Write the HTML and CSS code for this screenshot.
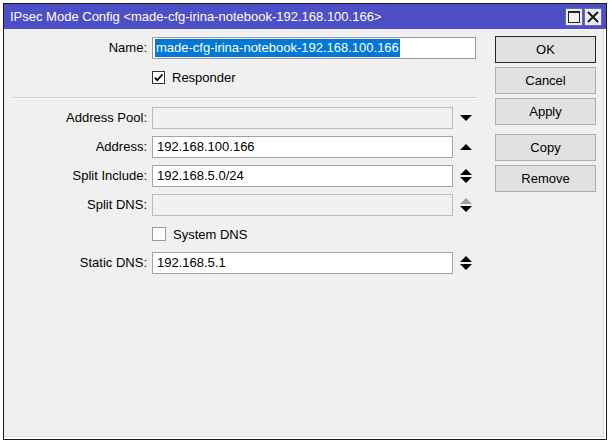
FILE: index.html
```html
<!DOCTYPE html>
<html>
<head>
<meta charset="utf-8">
<link rel="stylesheet" href="styles.css">
</head>
<body>
<div class="window">
  <div class="titlebar">
    <span class="title">IPsec Mode Config &lt;made-cfg-irina-notebook-192.168.100.166&gt;</span>
    <div class="tbtns">
      <span class="tbtn"><span class="maxsq"></span></span>
      <span class="tbtn"><svg width="12" height="12" viewBox="0 0 12 12"><path d="M1 1L11 11M11 1L1 11" stroke="#111" stroke-width="1.8" fill="none"/></svg></span>
    </div>
  </div>
  <div class="content">
    <div class="form">
      <div class="lbl">Name:</div>
      <div class="field wide"><span class="sel">made-cfg-irina-notebook-192.168.100.166</span></div>

      <div class="check-row">
        <span class="cb dark"><svg width="11" height="11" viewBox="0 0 11 11"><path d="M1.8 5.6L4.3 8.2L9.4 2.4" stroke="#000" stroke-width="1.7" fill="none"/></svg></span>
        <span>Responder</span>
      </div>

      <div class="sep"></div>

      <div class="lbl">Address Pool:</div>
      <div class="field disabled"></div>
      <div class="arrows"><svg width="12" height="6" viewBox="0 0 12 6"><polygon points="0,0 12,0 6,6" fill="#000"/></svg></div>

      <div class="lbl">Address:</div>
      <div class="field">192.168.100.166</div>
      <div class="arrows"><svg width="12" height="6" viewBox="0 0 12 6"><polygon points="0,6 12,6 6,0" fill="#000"/></svg></div>

      <div class="lbl">Split Include:</div>
      <div class="field">192.168.5.0/24</div>
      <div class="arrows"><svg width="12" height="6" viewBox="0 0 12 6"><polygon points="0,6 12,6 6,0" fill="#000"/></svg><svg width="12" height="6" viewBox="0 0 12 6"><polygon points="0,0 12,0 6,6" fill="#000"/></svg></div>

      <div class="lbl">Split DNS:</div>
      <div class="field disabled"></div>
      <div class="arrows"><svg width="12" height="6" viewBox="0 0 12 6"><polygon points="0,6 12,6 6,0" fill="#a0a0a0"/></svg><svg width="12" height="6" viewBox="0 0 12 6"><polygon points="0,0 12,0 6,6" fill="#000"/></svg></div>

      <div class="check-row">
        <span class="cb light"></span>
        <span>System DNS</span>
      </div>

      <div class="lbl">Static DNS:</div>
      <div class="field">192.168.5.1</div>
      <div class="arrows"><svg width="12" height="6" viewBox="0 0 12 6"><polygon points="0,6 12,6 6,0" fill="#000"/></svg><svg width="12" height="6" viewBox="0 0 12 6"><polygon points="0,0 12,0 6,6" fill="#000"/></svg></div>
    </div>
    <div class="buttons">
      <div class="btn default">OK</div>
      <div class="btn">Cancel</div>
      <div class="btn">Apply</div>
      <div class="btn gap">Copy</div>
      <div class="btn">Remove</div>
    </div>
  </div>
</div>
</body>
</html>
```

FILE: styles.css
```css
html, body {
  margin: 0;
  padding: 0;
  background: #ffffff;
}
body {
  font-family: "Liberation Sans", Arial, sans-serif;
  font-size: 13px;
  color: #000;
  width: 609px;
  height: 442px;
  overflow: hidden;
}
.window {
  margin: 3px 0 0 3px;
  width: 602px;
  height: 435px;
  border: 1px solid #1a1a1a;
  background: #f0f0f0;
  display: flex;
  flex-direction: column;
}
.titlebar {
  height: 25px;
  background: #4e4ec6;
  display: flex;
  align-items: center;
  justify-content: space-between;
  padding: 0 4px 0 6px;
}
.title {
  color: #ffffff;
  font-size: 13px;
  white-space: nowrap;
}
.tbtns {
  display: flex;
  gap: 1px;
  align-self: flex-start;
  margin-top: 4px;
}
.tbtn {
  width: 18px;
  height: 18px;
  box-sizing: border-box;
  background: #ebebf3;
  border: 1px solid #6a6aa8;
  display: flex;
  align-items: center;
  justify-content: center;
}
.maxsq {
  width: 12px;
  height: 12px;
  box-sizing: border-box;
  border: 1px solid #222;
  border-top-width: 2px;
  background: #f4f4f4;
}
.content {
  flex: 1;
  display: flex;
  align-items: flex-start;
  padding-top: 8px;
  box-shadow: inset -2px -2px 0 #ffffff, inset -3px -3px 0 #d8d8d8;
}
.form {
  display: grid;
  grid-template-columns: 143px 301px 18px;
  column-gap: 5px;
  row-gap: 7px;
}
.lbl {
  grid-column: 1;
  height: 22px;
  line-height: 22px;
  text-align: right;
  white-space: nowrap;
}
.field {
  grid-column: 2;
  height: 22px;
  box-sizing: border-box;
  border: 1px solid #a3a3a3;
  background: #ffffff;
  line-height: 20px;
  padding-left: 4px;
  white-space: nowrap;
  overflow: hidden;
}
.field.wide {
  grid-column: 2 / 4;
  padding-left: 2px;
  border-color: #9a9a9a;
  display: flex;
  align-items: center;
}
.field.disabled {
  background: #f0f0f0;
  border-color: #bcbcbc;
}
.sel {
  background: #0078d7;
  color: #ffffff;
  line-height: 18px;
  height: 18px;
  padding: 0 1px;
}
.arrows {
  grid-column: 3;
  height: 22px;
  display: flex;
  flex-direction: column;
  align-items: flex-start;
  justify-content: center;
  gap: 2px;
  padding-left: 2px;
}
.arrows svg {
  display: block;
}
.check-row {
  grid-column: 2 / 4;
  height: 22px;
  display: flex;
  align-items: center;
  gap: 7px;
}
.cb {
  width: 13px;
  height: 13px;
  box-sizing: border-box;
  background: #ffffff;
  display: flex;
  align-items: center;
  justify-content: center;
}
.cb.dark {
  border: 1px solid #333333;
}
.cb.light {
  width: 14px;
  height: 14px;
  border: 1px solid #9a9a9a;
}
.sep {
  grid-column: 1 / 4;
  margin: 2px 0 1px 9px;
  height: 1px;
  background: #d0d0d0;
  border-bottom: 1px solid #ffffff;
}
.buttons {
  margin-left: 19px;
  margin-top: -1px;
  width: 101px;
  display: flex;
  flex-direction: column;
  gap: 4px;
}
.btn {
  height: 27px;
  box-sizing: border-box;
  border: 1px solid #adadad;
  background: #e1e1e1;
  text-align: center;
  line-height: 25px;
}
.btn.default {
  border-color: #262626;
}
.btn.gap {
  margin-top: 5px;
}
```
